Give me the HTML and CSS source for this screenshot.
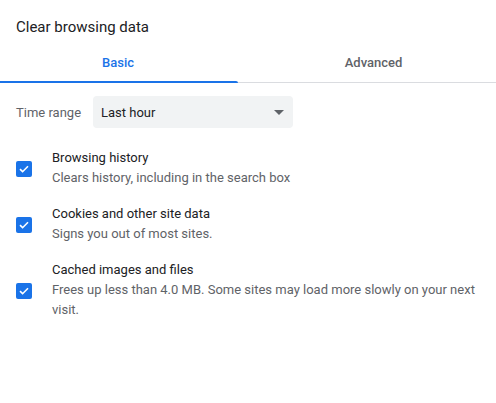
FILE: index.html
```html
<!DOCTYPE html>
<html>
<head>
<meta charset="utf-8">
<link rel="stylesheet" href="styles.css">
</head>
<body>
<div class="dialog">
  <div class="title">Clear browsing data</div>
  <div class="tabs">
    <div class="tab tab-basic active">Basic</div>
    <div class="tab tab-advanced">Advanced</div>
  </div>
  <div class="range-row">
    <span class="range-label">Time range</span>
    <div class="select">
      <span>Last hour</span>
      <svg class="arrow" width="10" height="5" viewBox="0 0 10 5"><path d="M0 0h10L5 5z" fill="#5f6368"/></svg>
    </div>
  </div>
  <div class="options">
    <div class="option">
      <span class="checkbox"><svg width="16" height="16" viewBox="0 0 16 16"><path d="M4 8.2l2.6 2.5L12 5.3" fill="none" stroke="#fff" stroke-width="1.6"/></svg></span>
      <div class="option-text">
        <div class="label">Browsing history</div>
        <div class="sub">Clears history, including in the search box</div>
      </div>
    </div>
    <div class="option">
      <span class="checkbox"><svg width="16" height="16" viewBox="0 0 16 16"><path d="M4 8.2l2.6 2.5L12 5.3" fill="none" stroke="#fff" stroke-width="1.6"/></svg></span>
      <div class="option-text">
        <div class="label">Cookies and other site data</div>
        <div class="sub">Signs you out of most sites.</div>
      </div>
    </div>
    <div class="option">
      <span class="checkbox"><svg width="16" height="16" viewBox="0 0 16 16"><path d="M4 8.2l2.6 2.5L12 5.3" fill="none" stroke="#fff" stroke-width="1.6"/></svg></span>
      <div class="option-text">
        <div class="label">Cached images and files</div>
        <div class="sub">Frees up less than 4.0 MB. Some sites may load more slowly on your next visit.</div>
      </div>
    </div>
  </div>
</div>
</body>
</html>
```
FILE: styles.css
```css
html, body {
  margin: 0;
  padding: 0;
  background: #fff;
}
body {
  font-family: Roboto, "Liberation Sans", sans-serif;
  color: #202124;
  font-size: 13px;
}
.dialog {
  width: 496px;
  height: 403px;
  overflow: hidden;
}
.title {
  padding: 15px 16px 0;
  font-size: 15px;
  line-height: 24px;
  color: #202124;
}
.tabs {
  display: flex;
  border-bottom: 1px solid #dadce0;
  height: 44px;
  box-sizing: border-box;
}
.tab {
  padding-top: 16px;
  line-height: 16px;
  font-size: 13px;
  font-weight: 500;
  color: #5f6368;
  text-align: center;
  position: relative;
}
.tab-basic {
  width: 238px;
  box-sizing: border-box;
  padding-right: 2px;
}
.tab-advanced {
  flex: 1;
  padding-left: 13px;
}
.tab.active {
  color: #1a73e8;
}
.tab.active::after {
  content: "";
  position: absolute;
  left: 0;
  right: 0;
  bottom: -1px;
  height: 2px;
  background: #1a73e8;
  border-radius: 0 2px 0 0;
}
.range-row {
  display: flex;
  align-items: center;
  padding: 13px 16px 0;
}
.range-label {
  color: #5f6368;
  width: 77px;
}
.select {
  width: 200px;
  height: 32px;
  box-sizing: border-box;
  background: #f1f3f4;
  border-radius: 4px;
  display: flex;
  align-items: center;
  justify-content: space-between;
  padding: 0 9px 0 8px;
  color: #202124;
}
.arrow {
  display: block;
}
.options {
  padding: 20px 16px 0;
  display: flex;
  flex-direction: column;
  gap: 16px;
}
.option {
  display: flex;
  align-items: center;
}
.checkbox {
  width: 16px;
  height: 16px;
  border-radius: 2px;
  background: #1a73e8;
  flex: none;
  margin-right: 20px;
  margin-top: 1px;
}
.checkbox svg {
  display: block;
}
.option-text {
  line-height: 20px;
  flex: 1;
}
.label {
  color: #202124;
}
.sub {
  color: #5f6368;
}
```
